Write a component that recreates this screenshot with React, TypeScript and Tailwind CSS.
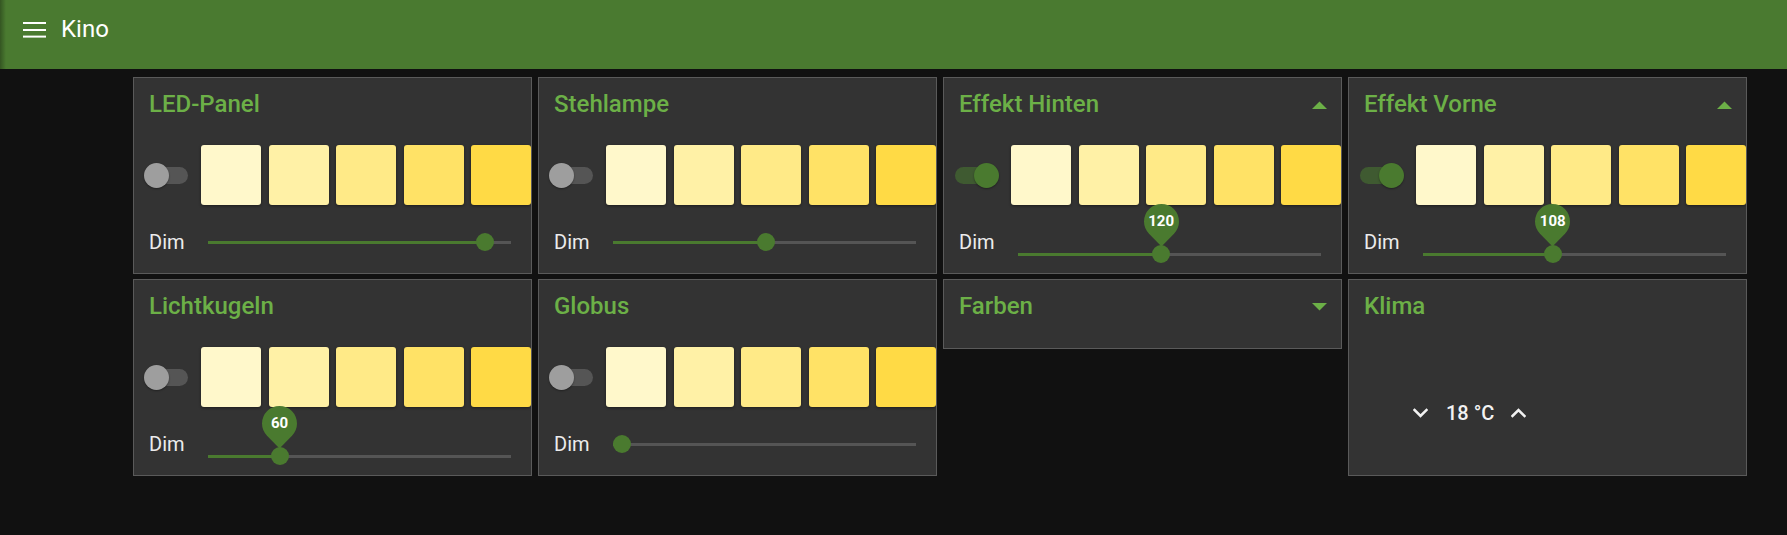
import React from "react";

type Light = {
  name: string;
  on: boolean;
  frac: number;
  pin?: string;
  arrow?: "up";
};

const SWATCHES = ["#fff8cb", "#fff1a6", "#ffea87", "#ffe266", "#ffda45"];
const TRACK_W = 303;
const THUMB = 18;

function Toggle({ on }: { on: boolean }) {
  return (
    <div className="relative w-[46px] h-[25px] shrink-0">
      <div
        className={
          "absolute left-[1px] top-[4px] w-[43px] h-[17px] rounded-full " +
          (on ? "bg-[#3f5a31]" : "bg-[#555555]")
        }
      />
      <div
        className={
          "absolute top-0 w-[25px] h-[25px] rounded-full shadow-[0_1px_2px_rgba(0,0,0,0.35)] " +
          (on ? "left-[20px] bg-[#4a7a2f]" : "left-0 bg-[#9e9e9e]")
        }
      />
    </div>
  );
}

function Pin({ label }: { label: string }) {
  return (
    <div className="relative w-[35px] h-[43px]">
      <svg width="35" height="43" viewBox="0 0 35 43" className="absolute inset-0">
        <path d="M17.5 42.5 L5 29.75 A17.5 17.5 0 1 1 30 29.75 Z" fill="#4a7a2f" />
      </svg>
      <div className="absolute left-0 top-0 w-[35px] h-[35px] flex items-center justify-center text-white text-[15px] font-bold leading-none">
        {label}
      </div>
    </div>
  );
}

function Slider({ frac, pin }: { frac: number; pin?: string }) {
  const center = THUMB / 2 + frac * (TRACK_W - THUMB);
  return (
    <div className={"relative w-[303px] h-[24px] flex items-center " + (pin ? "mt-[12px]" : "")}>
      <div className="relative w-full h-[3px] bg-[#555555]">
        <div className="absolute left-0 top-0 h-[3px] bg-[#4a7a2f]" style={{ width: center }} />
        <div
          className="absolute top-[-7.5px] w-[18px] h-[18px] rounded-full bg-[#4a7a2f]"
          style={{ left: center - THUMB / 2 }}
        />
        {pin && (
          <div className="absolute top-[-48.5px]" style={{ left: center - 17.5 }}>
            <Pin label={pin} />
          </div>
        )}
      </div>
    </div>
  );
}

function Triangle({ dir }: { dir: "up" | "down" }) {
  return (
    <svg width="15" height="8" viewBox="0 0 15 8">
      {dir === "up" ? (
        <polygon points="0,8 7.5,0.5 15,8" fill="#6cb047" />
      ) : (
        <polygon points="0,0 7.5,7.5 15,0" fill="#6cb047" />
      )}
    </svg>
  );
}

function Title({ text, arrow }: { text: string; arrow?: "up" | "down" }) {
  return (
    <div className="flex items-center justify-between pl-[15px] pr-[14px] pt-[12px] h-[40px]">
      <div className="text-[24px] leading-[28px] font-medium text-[#6cb047]">{text}</div>
      {arrow && (
        <div className="mt-[2px]">
          <Triangle dir={arrow} />
        </div>
      )}
    </div>
  );
}

function LightCard({ l }: { l: Light }) {
  return (
    <div className="h-[197px] border border-[#5a5a5a] bg-[#333333] flex flex-col overflow-hidden">
      <Title text={l.name} arrow={l.arrow} />
      <div className="flex items-center mt-[27px] pl-[10px]">
        <Toggle on={l.on} />
        <div className="flex gap-[7.5px] ml-[11px]">
          {SWATCHES.map((c) => (
            <div
              key={c}
              className="w-[60px] h-[60px] rounded-[3px] shrink-0 shadow-[0_1px_3px_rgba(0,0,0,0.45)]"
              style={{ backgroundColor: c }}
            />
          ))}
        </div>
      </div>
      <div className="flex items-start mt-[25px] pl-[15px]">
        <div className="w-[59px] h-[24px] flex items-center text-[20px] leading-[24px] text-[#ececec]">
          Dim
        </div>
        <Slider frac={l.frac} pin={l.pin} />
      </div>
    </div>
  );
}

function Chevron({ dir }: { dir: "up" | "down" }) {
  return (
    <svg width="15" height="10" viewBox="0 0 15 10">
      <polyline
        points={dir === "down" ? "1.5,2 7.5,8 13.5,2" : "1.5,8 7.5,2 13.5,8"}
        fill="none"
        stroke="#f2f2f2"
        strokeWidth="2.6"
        strokeLinecap="square"
      />
    </svg>
  );
}

export default function App() {
  const row1: Light[] = [
    { name: "LED-Panel", on: false, frac: 0.94 },
    { name: "Stehlampe", on: false, frac: 0.506 },
    { name: "Effekt Hinten", on: true, frac: 120 / 255, pin: "120", arrow: "up" },
    { name: "Effekt Vorne", on: true, frac: 108 / 255, pin: "108", arrow: "up" },
  ];
  const row2: Light[] = [
    { name: "Lichtkugeln", on: false, frac: 0.2196, pin: "60" },
    { name: "Globus", on: false, frac: 0 },
  ];
  return (
    <div
      className="min-h-screen bg-[#111111] text-white"
      style={{ fontFamily: "Roboto, 'Noto Sans', 'Liberation Sans', sans-serif" }}
    >
      <header className="relative h-[69px] bg-[#4a7a30]">
        <div className="absolute left-0 top-0 h-full w-[6px] bg-gradient-to-r from-black/30 to-transparent" />
        <div className="flex items-center h-[60px] pl-[23px]">
          <svg width="23" height="16" viewBox="0 0 23 16">
            <rect x="0" y="0" width="23" height="2" fill="#ffffff" />
            <rect x="0" y="7" width="23" height="2" fill="#ffffff" />
            <rect x="0" y="13.6" width="23" height="2" fill="#ffffff" />
          </svg>
          <div className="ml-[15px] text-[24px] leading-[28px] text-white -mt-[2px]">Kino</div>
        </div>
      </header>
      <main className="grid grid-cols-[repeat(4,399px)] gap-x-[6px] gap-y-[5px] items-start pl-[133px] pt-[8px]">
        {row1.map((l) => (
          <LightCard key={l.name} l={l} />
        ))}
        {row2.map((l) => (
          <LightCard key={l.name} l={l} />
        ))}
        <div className="h-[70px] border border-[#5a5a5a] bg-[#333333]">
          <Title text="Farben" arrow="down" />
        </div>
        <div className="h-[197px] border border-[#5a5a5a] bg-[#333333] flex flex-col">
          <Title text="Klima" />
          <div className="flex items-center h-[24px] mt-[81px] pl-[64px]">
            <Chevron dir="down" />
            <div className="ml-[18px] text-[20px] leading-[24px] font-medium text-[#f2f2f2]">18 °C</div>
            <div className="ml-[17px]">
              <Chevron dir="up" />
            </div>
          </div>
        </div>
      </main>
    </div>
  );
}
